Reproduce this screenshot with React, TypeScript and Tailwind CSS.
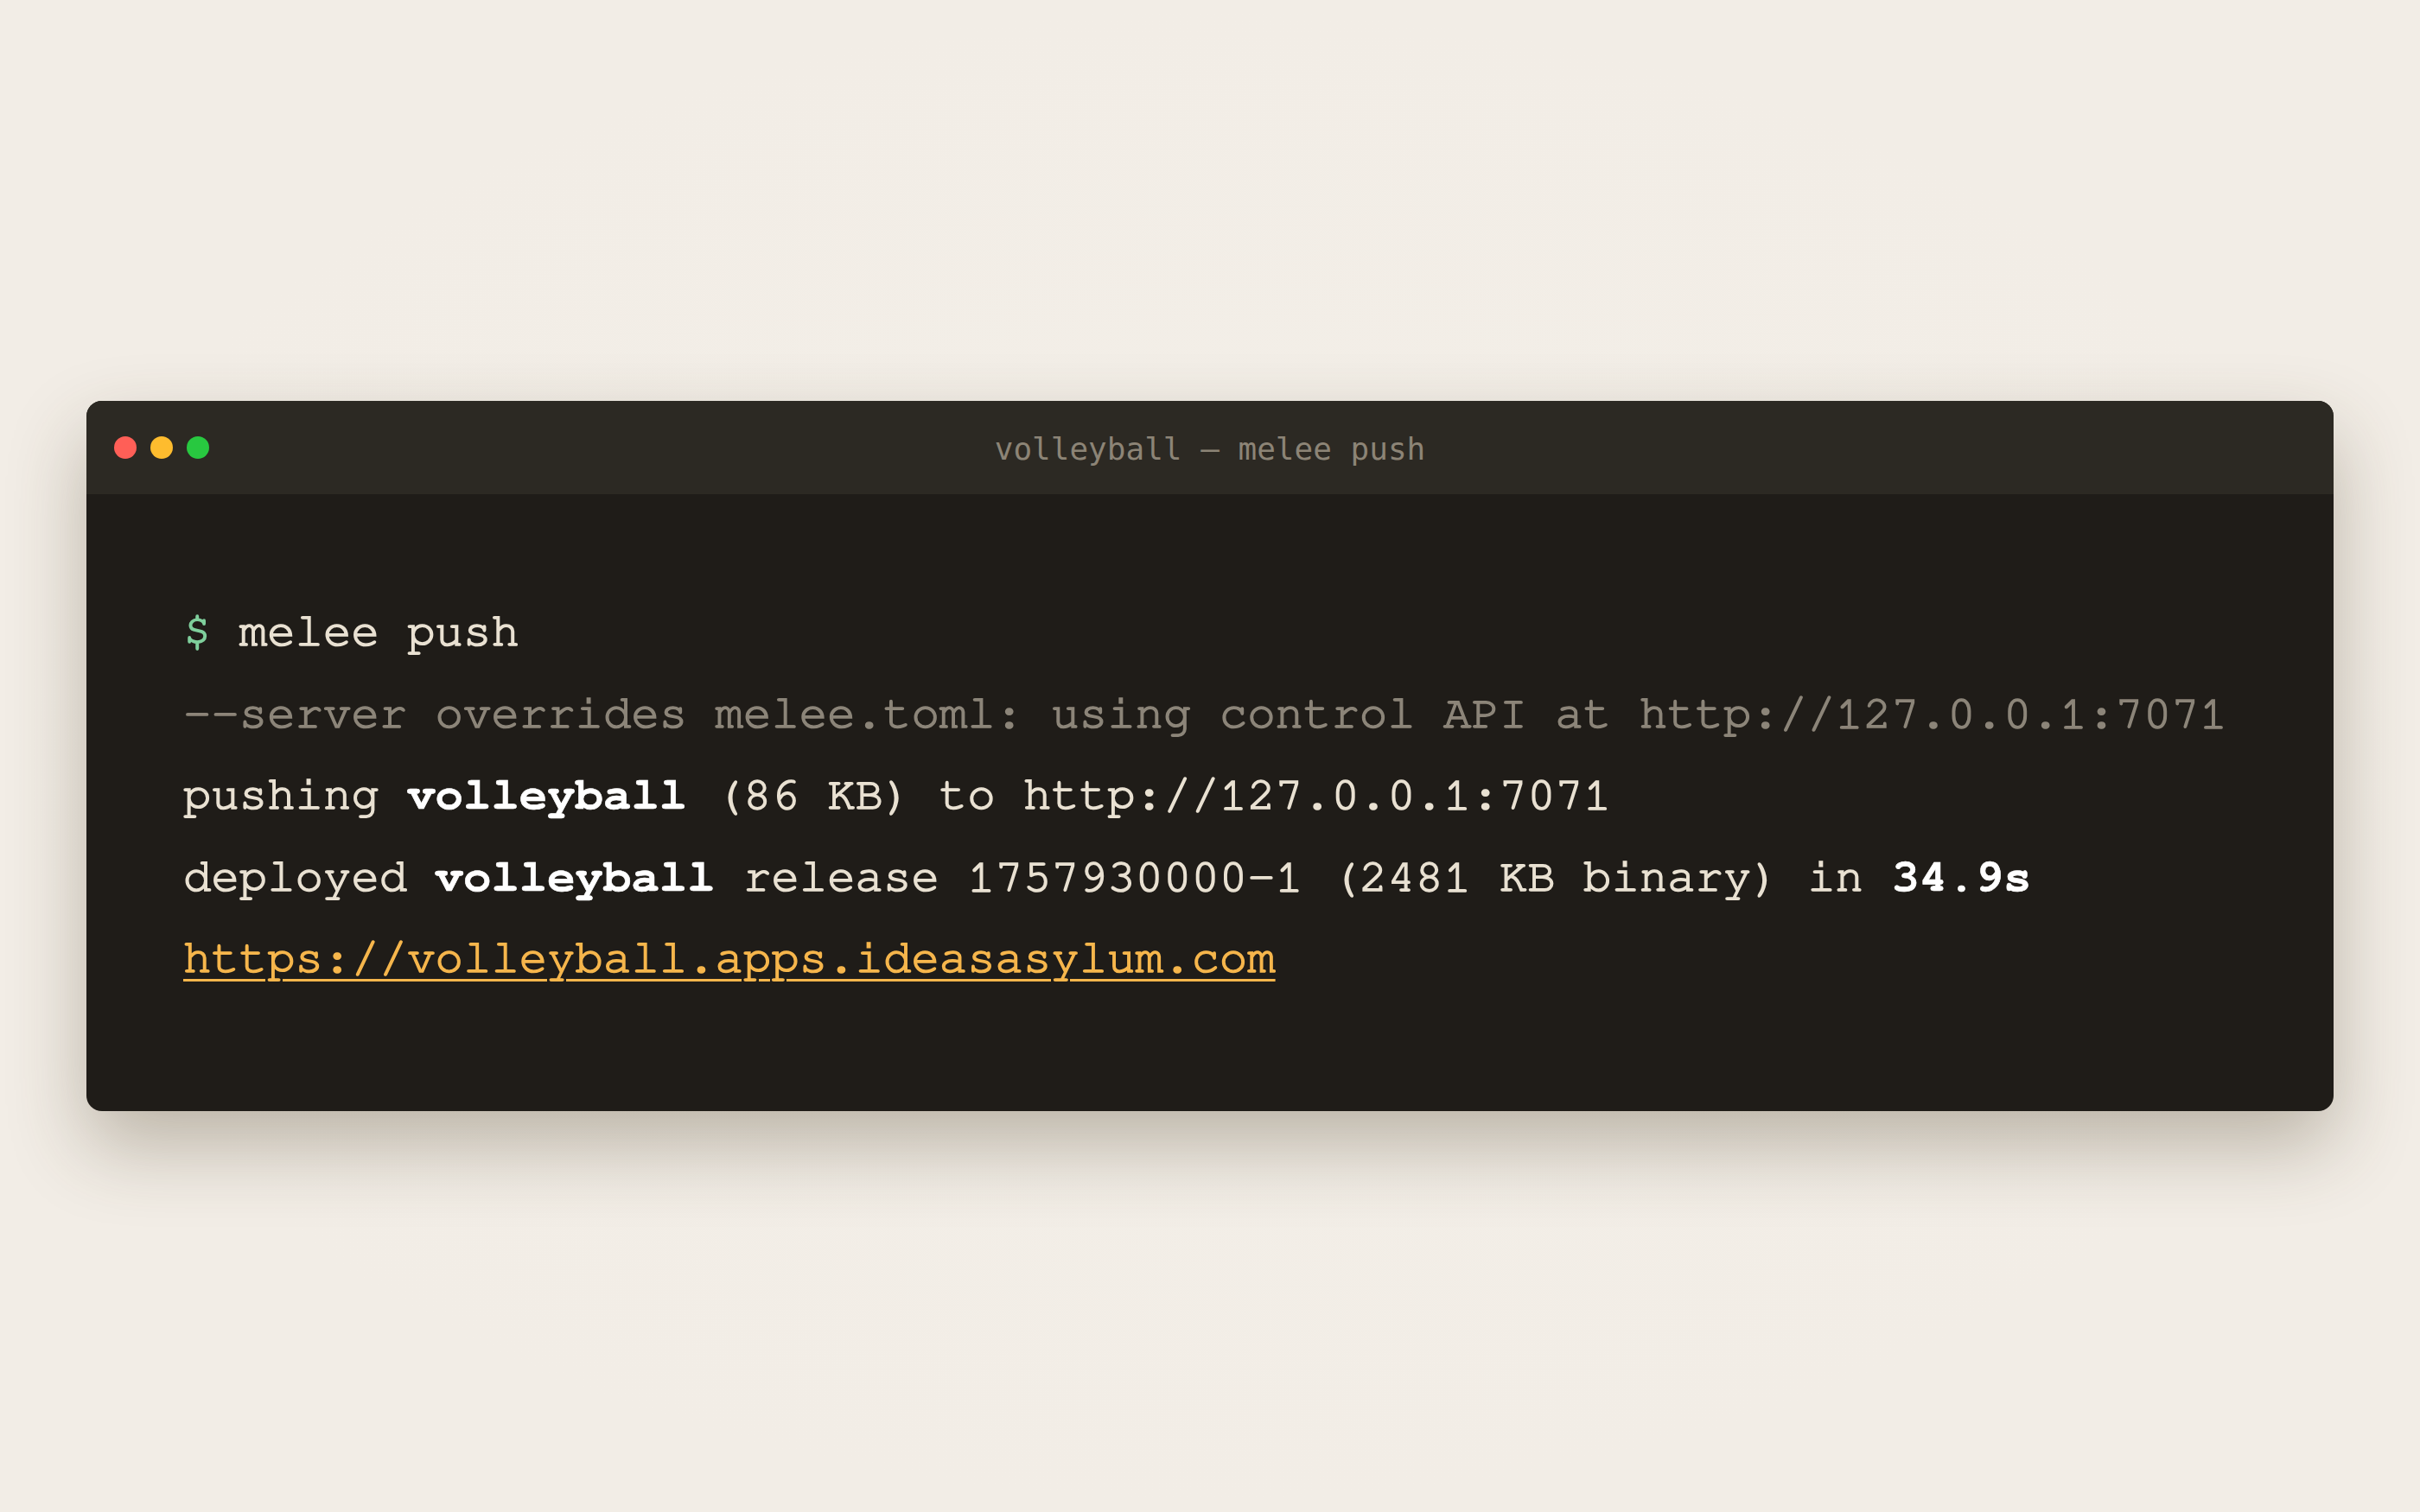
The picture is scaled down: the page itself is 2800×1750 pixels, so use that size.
const mono = "font-['Nimbus_Mono_PS','Nimbus_Mono_L','FreeMono','Courier','Liberation_Mono',monospace]";
const bold = "font-bold text-white [-webkit-text-stroke:0.6px_currentColor]";

export default function App() {
  return (
    <div className="min-h-screen w-full bg-[#f2ede6] bg-[radial-gradient(ellipse_at_center,#f3efe8_0%,#f2ede6_70%)] flex items-center justify-center px-[100px]">
      <div className="w-full rounded-[18px] overflow-hidden bg-[#1f1c18] shadow-[0_40px_90px_rgba(70,58,35,0.32)]">
        {/* Title bar */}
        <div className="relative h-[108px] bg-[#2c2923] flex items-center px-[32px]">
          <div className="flex items-center gap-[16px]">
            <span className="block w-[26px] h-[26px] rounded-full bg-[#ff5f57]"></span>
            <span className="block w-[26px] h-[26px] rounded-full bg-[#febc2e]"></span>
            <span className="block w-[26px] h-[26px] rounded-full bg-[#28c840]"></span>
          </div>
          <div className="absolute inset-0 pt-[3px] flex items-center justify-center pointer-events-none">
            <span className="font-['DejaVu_Sans_Mono',monospace] text-[36px] text-[#8c8476]">
              volleyball — melee push
            </span>
          </div>
        </div>

        {/* Terminal body */}
        <div className={`${mono} text-[54px] leading-[94.5px] text-[#e9e1d2] [-webkit-text-stroke:1.7px_currentColor] pl-[112px] pr-[60px] pt-[112px] pb-[129px] whitespace-pre`}>
          <div>
            <span className="text-[#7fcf9c]">$</span> melee push
          </div>
          <div className="text-[#8c8579]">
            --server overrides melee.toml: using control API at http://127.0.0.1:7071
          </div>
          <div>
            pushing <span className={bold}>volleyball</span> (86 KB) to http://127.0.0.1:7071
          </div>
          <div>
            deployed <span className={bold}>volleyball</span> release 1757930000-1 (2481 KB binary) in{" "}
            <span className={bold}>34.9s</span>
          </div>
          <div>
            <a
              href="#"
              className="text-[#f6b64c] underline decoration-[3px] underline-offset-[8px]"
            >
              https://volleyball.apps.ideasasylum.com
            </a>
          </div>
        </div>
      </div>
    </div>
  );
}
